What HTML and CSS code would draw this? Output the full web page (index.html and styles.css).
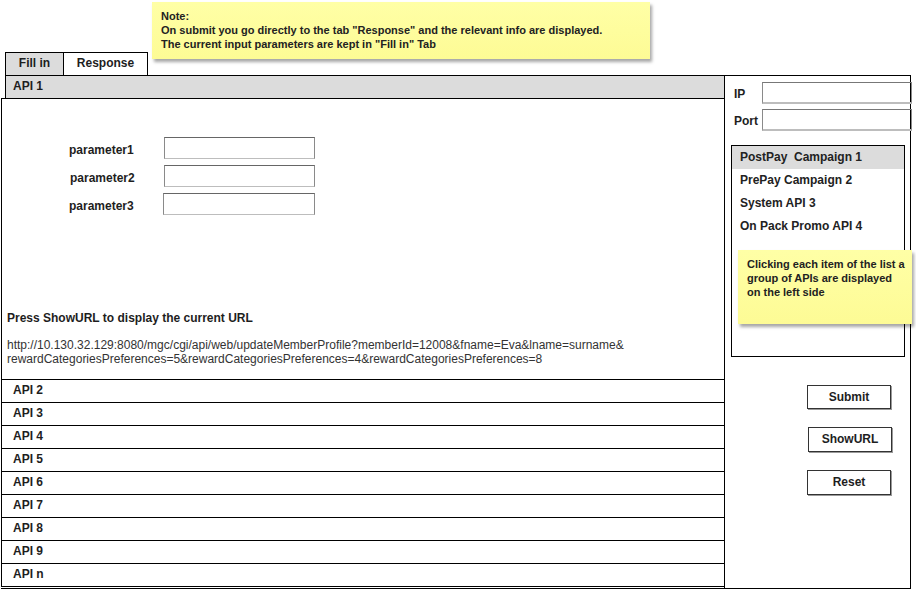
FILE: index.html
```html
<!DOCTYPE html>
<html>
<head>
<meta charset="utf-8">
<link rel="stylesheet" href="styles.css">
</head>
<body>
<div class="top">
  <div class="tabs">
    <div class="tab tab-fill">Fill in</div>
    <div class="tab tab-resp">Response</div>
  </div>
  <div class="note note-top">
    <div>Note:</div>
    <div>On submit you go directly to the tab "Response" and the relevant info are displayed.</div>
    <div>The current input parameters are kept in "Fill in" Tab</div>
  </div>
</div>
<div class="main">
  <div class="left">
    <div class="api-head">API 1</div>
    <div class="api-body">
      <div class="params">
        <div class="plabel">parameter1</div><div class="pinput"></div>
        <div class="plabel p2">parameter2</div><div class="pinput"></div>
        <div class="plabel">parameter3</div><div class="pinput p3"></div>
      </div>
      <div class="urlsec">
        <div class="urltitle">Press ShowURL to display the current URL</div>
        <div class="url">http://10.130.32.129:8080/mgc/cgi/api/web/updateMemberProfile?memberId=12008&amp;fname=Eva&amp;lname=surname&amp;<br>rewardCategoriesPreferences=5&amp;rewardCategoriesPreferences=4&amp;rewardCategoriesPreferences=8</div>
      </div>
    </div>
    <div class="api-row">API 2</div>
    <div class="api-row">API 3</div>
    <div class="api-row">API 4</div>
    <div class="api-row">API 5</div>
    <div class="api-row">API 6</div>
    <div class="api-row">API 7</div>
    <div class="api-row">API 8</div>
    <div class="api-row">API 9</div>
    <div class="api-row last">API n</div>
  </div>
  <div class="right">
    <div class="field"><span class="flabel">IP</span><div class="finput"></div></div>
    <div class="field"><span class="flabel">Port</span><div class="finput"></div></div>
    <div class="list">
      <div class="item sel">PostPay&nbsp; Campaign 1</div>
      <div class="item">PrePay Campaign 2</div>
      <div class="item">System API 3</div>
      <div class="item">On Pack Promo API 4</div>
    </div>
    <div class="note note-side">Clicking each item of the list a group of APIs are displayed on the left side</div>
    <div class="buttons">
      <div class="btn">Submit</div>
      <div class="btn b2">ShowURL</div>
      <div class="btn b3">Reset</div>
    </div>
  </div>
</div>
</body>
</html>
```
FILE: styles.css
```css
* { box-sizing: border-box; }
html, body { margin: 0; padding: 0; background: #fff; }
body {
  font-family: "Liberation Sans", Arial, sans-serif;
  font-size: 12px;
  color: #1e1e1e;
  width: 916px;
  height: 592px;
  overflow: hidden;
}
.top {
  display: flex;
  align-items: flex-end;
  height: 75px;
  padding-left: 5px;
}
.tabs { display: flex; flex-shrink: 0; }
.tab {
  height: 23px;
  border: 1px solid #000;
  border-bottom: none;
  font-weight: bold;
  font-size: 12px;
  line-height: 21px;
  text-align: center;
}
.tab-fill { width: 59px; background: #dcdcdc; }
.tab-resp { width: 84px; border-left: none; background: #fff; }
.note {
  background: linear-gradient(#ffffa6, #fdfb95);
  box-shadow: 2px 3px 3px rgba(0,0,0,0.35);
  font-weight: bold;
  font-size: 11px;
  line-height: 14px;
  color: #222;
}
.note-top {
  flex-shrink: 0;
  align-self: flex-start;
  margin-top: 2px;
  margin-left: 4px;
  width: 498px;
  height: 57px;
  padding: 7px 0 0 9px;
}
.main {
  display: flex;
  margin-left: 1px;
  width: 910px;
  height: 514px;
  border-right: 1px solid #000;
  border-bottom: 1px solid #000;
}
.left {
  flex-shrink: 0;
  width: 724px;
  border-right: 1px solid #000;
  display: flex;
  flex-direction: column;
}
.api-head {
  margin-left: 4px;
  height: 23px;
  border-left: 1px solid #000;
  border-top: 1px solid #000;
  background: #dcdcdc;
  font-weight: bold;
  line-height: 21px;
  padding-left: 7px;
}
.api-body {
  height: 281px;
  border-left: 1px solid #000;
  border-top: 1px solid #000;
  display: flex;
  flex-direction: column;
  padding: 38px 0 13px 0;
}
.params {
  display: grid;
  grid-template-columns: 95px 151px;
  grid-auto-rows: 22px;
  row-gap: 6px;
  padding-left: 67px;
  align-items: center;
}
.plabel { font-weight: bold; padding-top: 3px; }
.p2 { padding-left: 1px; }
.pinput {
  height: 22px;
  border: 1px solid #8a8a8a;
  border-top-color: #666;
  border-bottom-color: #bdbdbd;
}
.p3 { margin-left: -1px; }
.urlsec { margin-top: auto; padding-left: 5px; }
.urltitle { font-weight: bold; line-height: 14px; margin-bottom: 13px; }
.url { line-height: 14px; color: #333; }
.api-row {
  height: 23px;
  border-left: 1px solid #000;
  border-top: 1px solid #000;
  font-weight: bold;
  line-height: 21px;
  padding-left: 11px;
}
.api-row.last { height: 24px; border-bottom: 1px solid #000; }
.right {
  position: relative;
  flex: 1;
  min-width: 0;
  border-top: 1px solid #000;
  padding: 6px 0 0 6px;
  display: flex;
  flex-direction: column;
}
.field {
  display: flex;
  align-items: center;
  padding-left: 3px;
  margin-bottom: 5px;
}
.flabel { width: 28px; flex-shrink: 0; font-weight: bold; padding-top: 1px; }
.finput {
  flex-shrink: 0;
  width: 150px;
  height: 22px;
  border: 1px solid #8a8a8a;
  border-top-color: #777;
  border-bottom: 2px solid #bdbdbd;
}
.list {
  margin-top: 9px;
  width: 174px;
  height: 212px;
  border: 1px solid #000;
}
.item {
  height: 23px;
  line-height: 21px;
  padding: 1px 0 0 8px;
  font-weight: bold;
  color: #222;
}
.item.sel { background: #dcdcdc; }
.note-side {
  position: absolute;
  left: 13px;
  top: 174px;
  width: 174px;
  height: 74px;
  padding: 7px 4px 0 9px;
}
.buttons {
  display: flex;
  flex-direction: column;
  align-items: flex-start;
  margin-top: 28px;
  margin-left: 76px;
}
.btn {
  width: 84px;
  height: 24px;
  border: 1px solid #333;
  box-shadow: 1px 1px 0 #999;
  font-weight: bold;
  text-align: center;
  line-height: 22px;
}
.b2 { margin-top: 18px; margin-left: 1px; height: 25px; line-height: 23px; }
.b3 { margin-top: 18px; height: 25px; line-height: 23px; }
```
